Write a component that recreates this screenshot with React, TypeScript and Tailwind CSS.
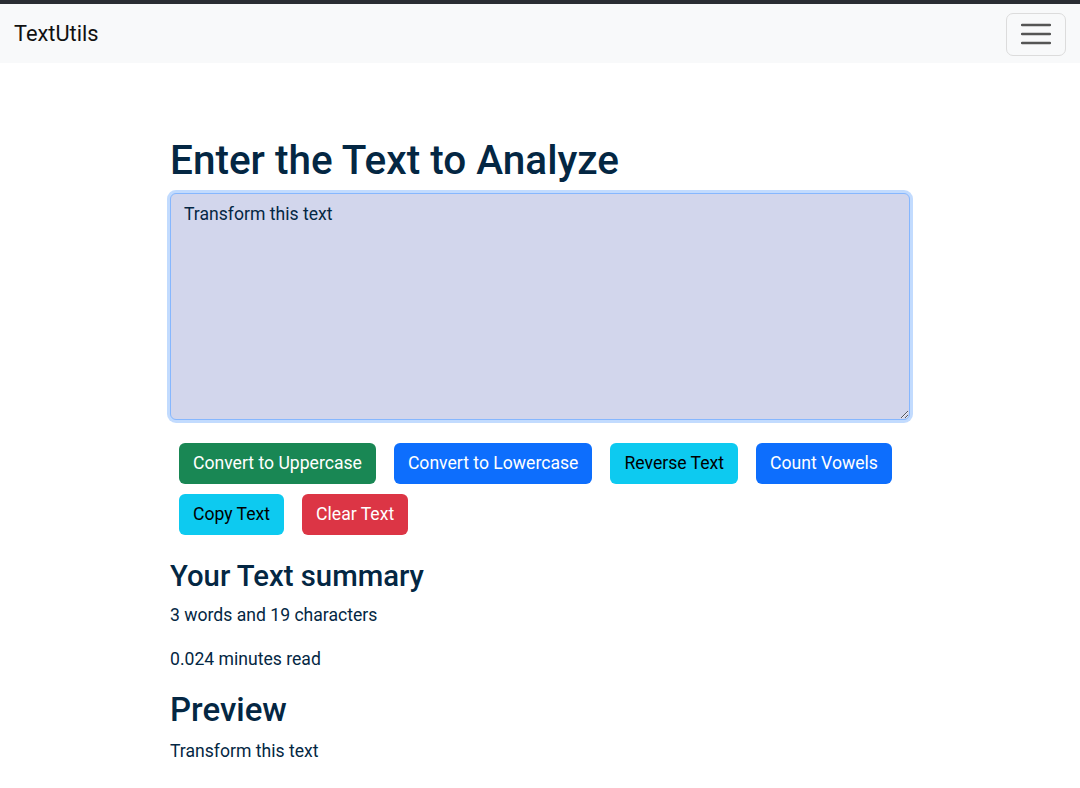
import React from "react";

export default function App() {
  const font = { fontFamily: "Roboto, 'Noto Sans', sans-serif" };
  return (
    <div className="min-h-[788px] bg-white" style={font}>
      <div className="h-[4px] bg-[#2a2d33]" />
      <nav className="h-[59px] bg-[#f8f9fa] flex items-center justify-between pl-[14px] pr-[14px]">
        <span className="text-[21.8px] text-[#111] leading-none">TextUtils</span>
        <button className="w-[60px] h-[43px] border border-[#dcdcdc] rounded-[7px] flex items-center justify-center mt-[1px]">
          <svg width="30" height="24" viewBox="0 0 30 24">
            <path d="M1 3h28M1 12h28M1 21h28" stroke="#555" strokeWidth="2.4" strokeLinecap="round" />
          </svg>
        </button>
      </nav>
      <main className="w-[740px] mx-auto text-[#042743]">
        <h1 className="mt-[73px] text-[40.5px] leading-[48px] font-medium">Enter the Text to Analyze</h1>
        <textarea
          readOnly
          value="Transform this text"
          className="mt-[9px] block w-full h-[227px] bg-[#d2d6ec] text-[#042743] text-[17.6px] leading-[26px] px-[13px] py-[7px] border border-[#86b7fe] rounded-[6px] shadow-[0_0_0_3px_rgba(13,110,253,0.25)] outline-none"
        />
        <div className="mt-[23px] flex flex-wrap gap-y-[10px] pl-[9px] text-[17.6px]">
          <button className="h-[41px] px-[14px] mr-[18px] rounded-[6px] bg-[#198754] text-white">Convert to Uppercase</button>
          <button className="h-[41px] px-[14px] mr-[18px] rounded-[6px] bg-[#0d6efd] text-white">Convert to Lowercase</button>
          <button className="h-[41px] px-[14px] mr-[18px] rounded-[6px] bg-[#0dcaf0] text-black">Reverse Text</button>
          <button className="h-[41px] px-[14px] mr-[18px] rounded-[6px] bg-[#0d6efd] text-white">Count Vowels</button>
          <button className="h-[41px] px-[14px] mr-[18px] rounded-[6px] bg-[#0dcaf0] text-black">Copy Text</button>
          <button className="h-[41px] px-[14px] mr-[18px] rounded-[6px] bg-[#dc3545] text-white">Clear Text</button>
        </div>
        <h2 className="mt-[23px] text-[29.3px] leading-[36px] font-medium">Your Text summary</h2>
        <p className="mt-[8px] text-[17.6px] leading-[26px]">3 words and 19 characters</p>
        <p className="mt-[18px] text-[17.6px] leading-[26px]">0.024 minutes read</p>
        <h2 className="mt-[17px] text-[33px] leading-[42px] font-medium">Preview</h2>
        <p className="mt-[7px] text-[17.6px] leading-[26px]">Transform this text</p>
      </main>
    </div>
  );
}
